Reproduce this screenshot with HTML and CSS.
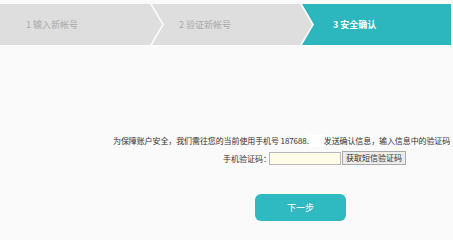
FILE: index.html
```html
<!DOCTYPE html>
<html lang="zh-CN">
<head>
<meta charset="utf-8">
<title>安全确认</title>
<link rel="stylesheet" href="styles.css">
</head>
<body>
<div class="steps">
  <div class="step s1">1 输入新帐号</div>
  <div class="step s2">2 验证新帐号</div>
  <div class="step s3">3 安全确认</div>
</div>
<p class="msg">为保障账户安全，我们需往您的当前使用手机号 187688.<span class="mask"></span>发送确认信息，输入信息中的验证码</p>
<div class="verify">
  <label class="label" for="code">手机验证码：</label>
  <input class="code" id="code" type="text">
  <button class="get" type="button">获取短信验证码</button>
</div>
<button class="next" type="button">下一步</button>
</body>
</html>
```

FILE: styles.css
```css
html, body {
  margin: 0;
  padding: 0;
}
body {
  width: 453px;
  height: 222px;
  overflow: hidden;
  background: #fafafa;
  font-family: "Noto Sans CJK SC", "Noto Sans", sans-serif;
  color: #333;
}
.steps {
  display: flex;
  height: 41px;
  margin-top: 4px;
}
.step {
  flex: none;
  box-sizing: border-box;
  height: 41px;
  display: flex;
  align-items: center;
  font-size: 9px;
  color: #a9a9a9;
  background: #dedede;
}
.s1 {
  width: 162px;
  padding-left: 26px;
  clip-path: polygon(0 0, 150px 0, 162px 50%, 150px 100%, 0 100%);
}
.s2 {
  width: 160px;
  margin-left: -10px;
  padding-left: 27px;
  clip-path: polygon(0 0, 148px 0, 160px 50%, 148px 100%, 0 100%, 12px 50%);
}
.s3 {
  width: 149px;
  margin-left: -10px;
  padding-left: 31px;
  background: #2cb7bf;
  color: #fff;
  font-weight: bold;
  clip-path: polygon(0 0, 100% 0, 100% 100%, 0 100%, 12px 50%);
}
.msg {
  margin: 90px 0 0;
  padding-left: 113px;
  white-space: nowrap;
  font-size: 8px;
  line-height: 12px;
  letter-spacing: -0.1px;
}
.mask {
  display: inline-block;
  width: 15px;
  height: 12px;
  vertical-align: top;
  background: #fff;
}
.verify {
  display: flex;
  align-items: center;
  height: 14px;
  margin-top: 4px;
  padding-left: 223px;
  font-size: 8px;
}
.label {
  width: 46px;
  white-space: nowrap;
}
.code {
  box-sizing: border-box;
  width: 72px;
  height: 13px;
  margin: 0 1px 0 0;
  padding: 0;
  border: 1px solid #b8b8b8;
  background: #fffde9;
}
.get {
  box-sizing: border-box;
  height: 14px;
  padding: 0 3px;
  border: 1px solid #a9a9a9;
  background: #ececec;
  font-family: inherit;
  font-size: 8px;
  line-height: 12px;
  color: #333;
}
.next {
  display: block;
  width: 91px;
  height: 27px;
  margin: 29px 0 0 255px;
  border: none;
  border-radius: 6px;
  background: #2fbac2;
  color: #fff;
  font-family: inherit;
  font-size: 9px;
}
```
